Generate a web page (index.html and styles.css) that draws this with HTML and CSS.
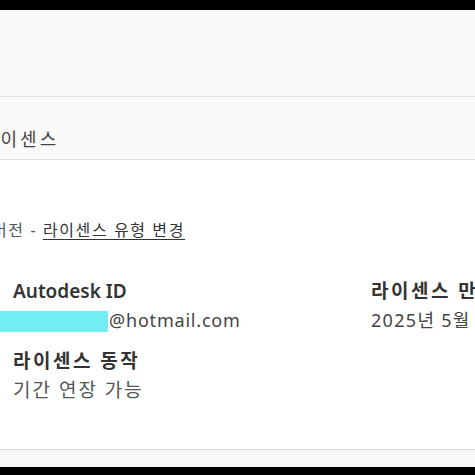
FILE: index.html
```html
<!DOCTYPE html>
<html lang="ko">
<head>
    <meta charset="UTF-8">
    <meta name="viewport" content="width=device-width, initial-scale=1.0">
    <title>라이센스</title>
    <link rel="stylesheet" href="styles.css">
</head>
<body>
    <div id="wrapper">
        <div class="topbar"></div>
        <div class="header"></div>
        <div class="tabrow">
            <span class="tab-title">라이센스</span>
        </div>
        <div class="content">
            <div class="version">
                <span class="version-name">버전 - </span><a class="version-link" href="#">라이센스 유형 변경</a>
            </div>
            <div class="info">
                <div class="info-item">
                    <div class="label">Autodesk ID</div>
                    <div class="value email"><span class="mask"></span>@hotmail.com</div>
                </div>
                <div class="info-item right">
                    <div class="label ko">라이센스 만료</div>
                    <div class="value date">2025년 5월 31일</div>
                </div>
                <div class="info-item">
                    <div class="label ko">라이센스 동작</div>
                    <div class="value ko">기간 연장 가능</div>
                </div>
            </div>
        </div>
        <div class="footer"></div>
        <div class="bottombar"></div>
    </div>
</body>
</html>
```

FILE: styles.css
```css
html, body{
    margin: 0;
    padding: 0;
    width: 475px;
    height: 475px;
    overflow: hidden;
    background-color: #000;
}
#wrapper{
    width: 475px;
    font-family: "Noto Sans", "Noto Sans CJK KR", sans-serif;
    color: #333;
}
.topbar{
    height: 10px;
    background-color: #000;
}
.header{
    height: 86px;
    background-color: #fafafa;
    border-bottom: 1px solid #e4e4e4;
}
.tabrow{
    height: 62px;
    background-color: #fafafa;
    border-bottom: 1px solid #dedede;
    display: flex;
    align-items: flex-end;
    overflow: hidden;
}
.tab-title{
    margin-left: -19px;
    margin-bottom: 8px;
    font-size: 18px;
    letter-spacing: 3px;
    color: #444;
    white-space: nowrap;
}
.content{
    height: 289px;
    background-color: #fff;
    border-bottom: 1px solid #dadada;
    overflow: hidden;
}
.version{
    margin-top: 57px;
    margin-left: -8px;
    font-size: 16px;
    letter-spacing: 1.6px;
    color: #555;
    white-space: nowrap;
}
.version-link{
    color: #333;
    text-decoration: underline;
    text-underline-offset: 3px;
}
.info{
    display: grid;
    grid-template-columns: 358px 1fr;
    row-gap: 16px;
    margin-top: 38px;
    padding-left: 13px;
}
.info-item{
    white-space: nowrap;
}
.info-item.right{
    overflow: hidden;
}
.label{
    font-size: 19px;
    font-weight: 600;
    color: #333;
    line-height: 24px;
}
.label.ko{
    font-size: 19px;
    font-weight: 700;
    letter-spacing: 2.5px;
}
.value{
    margin-top: 4px;
    font-size: 17px;
    color: #444;
    line-height: 26px;
}
.value.email{
    font-size: 18px;
    letter-spacing: 0.8px;
}
.value.date{
    font-size: 18px;
    letter-spacing: 1.3px;
}
.value.ko{
    font-size: 19px;
    letter-spacing: 2px;
    color: #555;
}
.mask{
    display: inline-block;
    width: 108px;
    height: 21px;
    margin-left: -13px;
    margin-right: 1px;
    vertical-align: -5px;
    background-color: #72eef2;
}
.footer{
    height: 17px;
    background-color: #f8f8f8;
}
.bottombar{
    height: 8px;
    background-color: #000;
}
```
